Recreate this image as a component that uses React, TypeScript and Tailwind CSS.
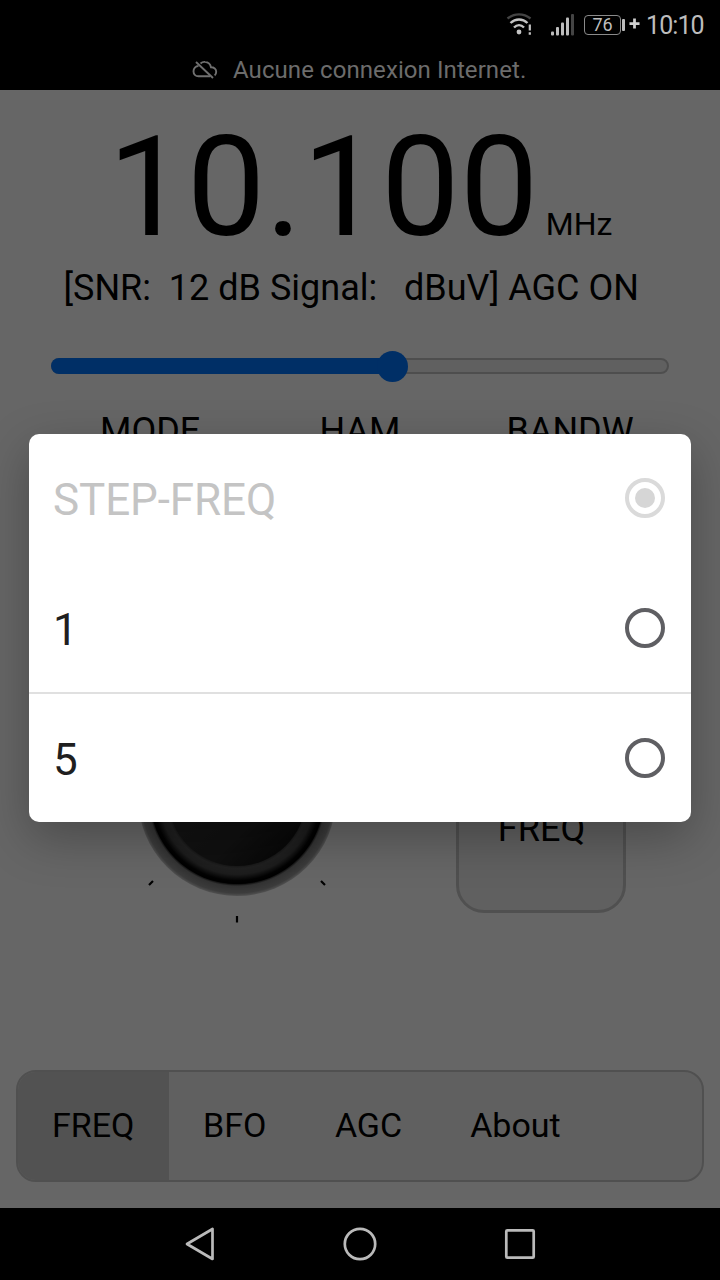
import React from "react";

const options = [
  { label: "STEP-FREQ", disabled: true, checked: true, row: "h-[128px]" },
  { label: "1", disabled: false, checked: false, row: "h-[130px] pt-[2px]" },
  { label: "5", disabled: false, checked: false, row: "h-[130px] border-t-2 border-[#e0e0e0]" },
];

function WifiIcon() {
  return (
    <svg className="mt-[2px] h-[26px] w-[28px]" viewBox="0 0 28 26" fill="none" strokeWidth="2.4">
      <path d="M1.500 5.500C8.500 0 17.500 0 24.500 5.500" stroke="#444" />
      <path d="M4.500 10C9.500 5.300 16.500 5.300 21.500 10" stroke="#c4c4c4" />
      <path d="M8 14.500C11 11.500 15 11.500 18 14.500" stroke="#c4c4c4" />
      <circle cx="13" cy="19" r="2.400" fill="#c4c4c4" />
      <path d="M23.800 11.500v6M23.800 19.300v2.400" stroke="#c4c4c4" strokeWidth="2.200" />
    </svg>
  );
}

function SignalIcon() {
  return (
    <svg className="h-[24px] w-[24px]" viewBox="0 0 24 24">
      <g fill="#bdbdbd">
        <rect x="0" y="17.500" width="3" height="4" rx="1" />
        <rect x="5" y="13" width="3" height="8.500" rx="1" />
        <rect x="10" y="8.500" width="3" height="13" rx="1" />
        <rect x="15" y="3.500" width="3" height="18" rx="1" />
      </g>
      <rect x="20" y="0" width="3" height="21.500" rx="1" fill="#444" />
    </svg>
  );
}

function CloudOffIcon() {
  return (
    <svg className="h-[20px] w-[26px]" viewBox="0 0 26 20" fill="none" stroke="#707070" strokeWidth="1.900">
      <path d="M6.500 6C3.500 6 1.500 8.500 1.500 11.200C1.500 14.200 3.500 16.300 6.500 16.300H18" />
      <path d="M8.500 3.500C10 2.200 11.500 1.700 13 1.900C16 2.200 18.300 4.200 19 7.200C22 7.200 24.200 9 24.200 11.700C24.200 13.200 23.800 14.600 22.600 15.400" />
      <path d="M4 2L21 18" />
    </svg>
  );
}

function StatusBar() {
  return (
    <header className="relative z-10 flex h-[90px] shrink-0 flex-col bg-black">
      <div className="flex h-[50px] items-center pl-[506px] text-[#bdbdbd]">
        <WifiIcon />
        <div className="ml-[17px] mt-[2px] h-6"><SignalIcon /></div>
        <div className="ml-[9px] flex h-[20px] w-[37px] items-center justify-center rounded-[4px] border-[1.5px] border-[#8a8a8a] text-[18px] leading-none">
          76
        </div>
        <div className="ml-[1px] h-[12px] w-[3px] rounded-[1px] bg-[#bdbdbd]" />
        <svg className="-mt-[3px] ml-[4px] h-[11px] w-[11px]" viewBox="0 0 12 12" stroke="#d0d0d0" strokeWidth="3">
          <path d="M6 .500v11M.500 6h11" />
        </svg>
        <span className="ml-[6px] text-[25px] leading-none tracking-[-0.9px]">10:10</span>
      </div>
      <div className="flex h-[40px] items-center pl-[192px] text-[#6c6c6c]">
        <CloudOffIcon />
        <span className="ml-[15px] whitespace-nowrap text-[24px] leading-none tracking-[0.08px]">
          Aucune connexion Internet.
        </span>
      </div>
    </header>
  );
}

function Knob() {
  return (
    <svg className="h-[256px] w-[256px]" viewBox="-128 -128 256 256">
      <defs>
        <radialGradient id="rim">
          <stop offset="0.870" stopColor="#000" />
          <stop offset="0.900" stopColor="#808080" />
          <stop offset="0.970" stopColor="#969696" />
          <stop offset="1" stopColor="#cccccc" />
        </radialGradient>
        <radialGradient id="bevel">
          <stop offset="0.760" stopColor="#222" />
          <stop offset="0.820" stopColor="#505050" />
          <stop offset="0.890" stopColor="#484848" />
          <stop offset="0.960" stopColor="#080808" />
          <stop offset="1" stopColor="#000" />
        </radialGradient>
        <linearGradient id="face" x1="0" y1="0" x2="1" y2="1">
          <stop offset="0.300" stopColor="#303030" />
          <stop offset="0.650" stopColor="#282828" />
          <stop offset="0.900" stopColor="#101010" />
        </linearGradient>
      </defs>
      <circle r="99" fill="url(#rim)" />
      <circle r="87" fill="url(#bevel)" />
      <circle r="69" fill="url(#face)" />
      <path d="M0 119v6.500M-84 84l-4 4M84 84l4 4" stroke="#000" strokeWidth="2.200" />
    </svg>
  );
}

function Radio({ checked, disabled }: { checked: boolean; disabled: boolean }) {
  return (
    <span
      className={`flex h-10 w-10 items-center justify-center rounded-full border-4 ${
        disabled ? "border-[#dadada]" : "border-[#5f5f63]"
      }`}
    >
      {checked && <span className="h-5 w-5 rounded-full bg-[#d6d6d6]" />}
    </span>
  );
}

function StepDialog() {
  return (
    <div className="absolute inset-x-0 bottom-0 top-[90px] bg-black/60 px-[29px] pt-[344px]">
      <div className="flex h-[388px] flex-col rounded-[10px] bg-white shadow-[0_16px_48px_rgba(0,0,0,0.28)]">
        {options.map((o) => (
          <div
            key={o.label}
            className={`flex shrink-0 items-center justify-between pl-[24px] pr-[26px] text-[44px] ${
              o.disabled ? "text-[#c4c4c4]" : "text-[#1f1f1f]"
            } ${o.row}`}
          >
            <span className="pt-[3px] leading-none tracking-[-0.1px]">{o.label}</span>
            <Radio checked={o.checked} disabled={o.disabled} />
          </div>
        ))}
      </div>
    </div>
  );
}

function Receiver() {
  return (
    <main className="flex h-[1118px] flex-col bg-white text-black">
      <div className="flex h-[172px] items-baseline whitespace-nowrap pl-[108px] pt-[15px]">
        <span className="text-[140px] leading-[164px]">10.100</span>
        <span className="ml-[7.5px] text-[32px]">MHz</span>
      </div>
      <div className="flex h-[52px] items-center whitespace-pre pl-[63.5px] text-[36px] leading-none">
        {"[SNR:  12 dB Signal:   dBuV] AGC ON"}
      </div>
      <div className="mx-[51px] mt-[36px] flex h-[32px] items-center">
        <div className="flex h-[16px] w-full items-center rounded-full border-2 border-[#c4c4c4] bg-[#efefef]">
          <div className="-ml-[2px] flex h-[16px] w-[343px] shrink-0 items-center justify-end rounded-full bg-[#0075ff]">
            <div className="-mr-[14px] h-[31px] w-[31px] shrink-0 rounded-full bg-[#0075ff]" />
          </div>
        </div>
      </div>
      <div className="mt-[29px] flex h-[40px] items-center text-[36px] leading-none">
        <span className="ml-[100px] w-[219.5px]">MODE</span>
        <span className="w-[187px]">HAM</span>
        <span>BANDW</span>
      </div>
      <div className="mt-[138px] flex h-[336px] shrink-0 items-end">
        <div className="ml-[109px] h-[256px] w-[256px]"><Knob /></div>
        <div className="mb-[12px] ml-[91px] flex h-[168px] w-[170px] items-center justify-center rounded-[28px] border-[3px] border-[#c8c8c8] bg-[#efefef] pl-px text-[36px] leading-none">
          FREQ
        </div>
      </div>
      <nav className="mx-4 mt-auto mb-[26px] flex h-[112px] shrink-0 items-center overflow-hidden rounded-[20px] border-2 border-[#c8c8c8] bg-[#efefef] text-[34px] leading-none">
        <span className="flex h-full w-[151px] items-center bg-[#cccccc] pb-[2px] pl-[34px]">FREQ</span>
        <span className="ml-[34px] pb-[2px]">BFO</span>
        <span className="ml-[68.5px] pb-[2px]">AGC</span>
        <span className="ml-[68px] pb-[2px]">About</span>
      </nav>
    </main>
  );
}

function NavigationBar() {
  return (
    <footer className="relative z-10 flex h-[72px] shrink-0 items-center justify-center gap-[124px] bg-black">
      {[0, 1, 2].map((i) => (
        <svg key={i} className="h-9 w-9" viewBox="-18 -18 36 36" fill="none" stroke="#bababa" strokeWidth="2.700" strokeLinejoin="round">
          {i === 0 && <path d="M12.500 -15V15L-13 0Z" />}
          {i === 1 && <circle r="15.200" />}
          {i === 2 && <rect x="-13.700" y="-13.700" width="27.400" height="27.400" rx="1" />}
        </svg>
      ))}
    </footer>
  );
}

export default function App() {
  return (
    <div className="relative flex h-[1280px] w-[720px] flex-col overflow-hidden bg-black font-['Roboto',sans-serif]">
      <StatusBar />
      <Receiver />
      <StepDialog />
      <NavigationBar />
    </div>
  );
}
